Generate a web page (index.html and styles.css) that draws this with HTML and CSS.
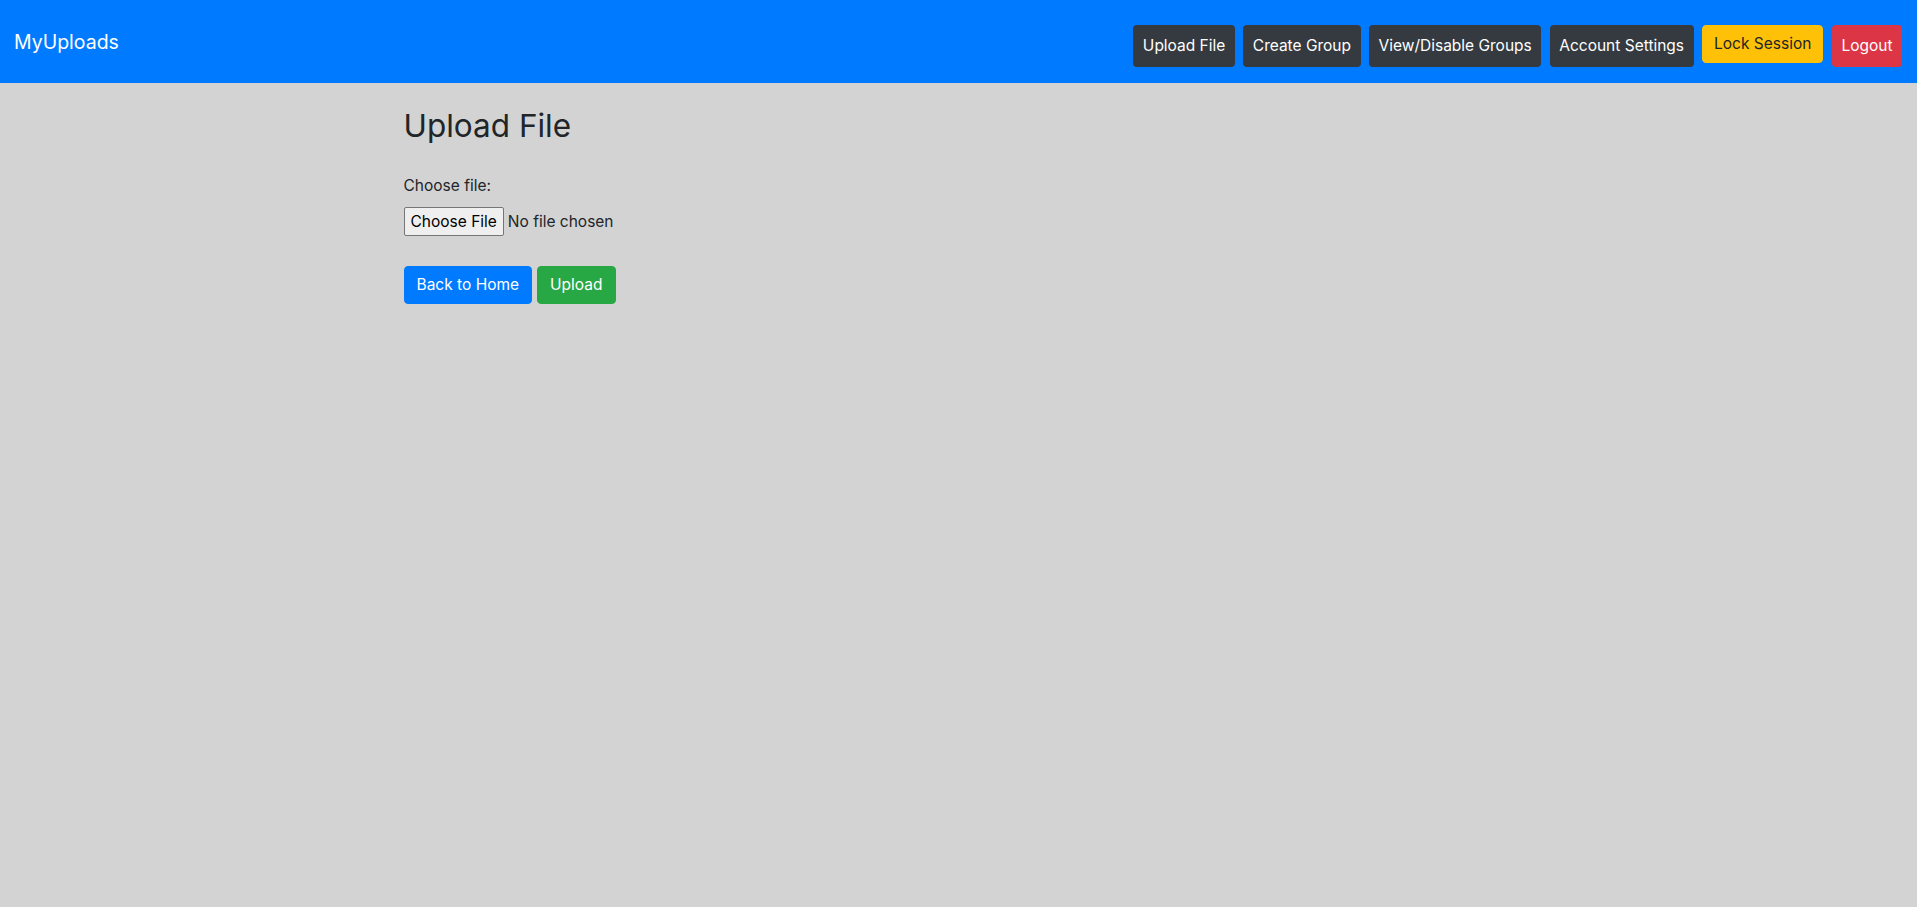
FILE: index.html
```html
<!DOCTYPE html>
<html lang="en">
<head>
<meta charset="utf-8">
<title>Upload File - MyUploads</title>
<link rel="stylesheet" href="styles.css">
</head>
<body>
<nav class="navbar">
  <a class="brand" href="#">MyUploads</a>
  <div class="nav-actions">
    <a class="nav-btn btn-dark" href="#">Upload File</a>
    <a class="nav-btn btn-dark" href="#">Create Group</a>
    <a class="nav-btn btn-dark" href="#">View/Disable Groups</a>
    <a class="nav-btn btn-dark" href="#">Account Settings</a>
    <button class="btn btn-warning" type="button">Lock Session</button>
    <a class="nav-btn btn-danger" href="#">Logout</a>
  </div>
</nav>
<main class="container">
  <h2 class="title">Upload File</h2>
  <form class="upload-form">
    <div class="field">
      <label class="label" for="file">Choose file:</label>
      <input class="file-input" id="file" type="file">
    </div>
    <div class="actions">
      <a class="btn btn-primary" href="#">Back to Home</a>
      <button class="btn btn-success" type="submit">Upload</button>
    </div>
  </form>
</main>
</body>
</html>
```

FILE: styles.css
```css
* { box-sizing: border-box; }
html, body { margin: 0; padding: 0; }
body {
  background: #d3d3d3;
  font-family: Inter, "Noto Sans", "Liberation Sans", sans-serif;
  font-size: 15.5px;
  line-height: 1.5;
  color: #212529;
  min-height: 907px;
}
.navbar {
  background: #007bff;
  height: 83px;
  display: flex;
  justify-content: space-between;
  align-items: flex-start;
  padding: 25px 15px 0 14px;
}
.brand {
  color: #fff;
  text-decoration: none;
  font-size: 19.5px;
  line-height: 30px;
  margin-top: 2px;
}
.nav-actions {
  display: flex;
  align-items: flex-start;
  gap: 8.5px;
}
.nav-btn {
  display: inline-block;
  font-size: 15.5px;
  line-height: 24px;
  padding: 9px 9.5px;
  border-radius: 4px;
  color: #fff;
  text-decoration: none;
  height: 42px;
}
.btn {
  display: inline-block;
  font-family: inherit;
  font-size: 15.5px;
  line-height: 24px;
  padding: 6px 12px;
  border: 1px solid transparent;
  border-radius: 4px;
  text-decoration: none;
  cursor: pointer;
  height: 38px;
}
.btn-dark { background: #343a40; color: #fff; }
.btn-warning { background: #ffc107; border-color: #ffc107; color: #212529; padding: 6px 11px; }
.btn-danger { background: #dc3545; color: #fff; }
.btn-primary { background: #007bff; border-color: #007bff; color: #fff; }
.btn-success { background: #28a745; border-color: #28a745; color: #fff; }
.container {
  width: 1140px;
  margin: 0 auto;
  padding: 0 15px;
}
.title {
  font-size: 31.5px;
  font-weight: 400;
  line-height: 38px;
  margin: 24px 0 0;
}
.upload-form { margin-top: 29px; }
.field { display: flex; flex-direction: column; align-items: flex-start; }
.label { font-size: 15.5px; line-height: 24px; margin-bottom: 9px; }
.file-input {
  font-family: inherit;
  font-size: 15.5px;
  line-height: 23px;
  color: #212529;
}
.file-input::file-selector-button {
  font-family: inherit;
  font-size: 15.5px;
  line-height: 23px;
  color: #000;
  background: #efefef;
  border: 1px solid #767676;
  border-radius: 2px;
  padding: 2px 6px;
  margin-right: 4px;
}
.actions {
  display: flex;
  gap: 5px;
  margin-top: 30px;
}
```
